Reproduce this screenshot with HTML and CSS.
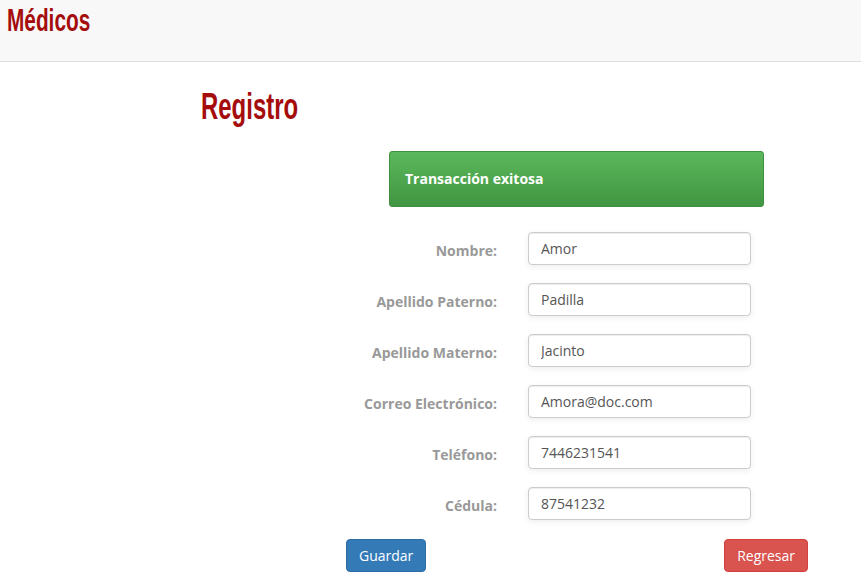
FILE: index.html
```html
<!DOCTYPE html>
<html lang="es">
<head>
    <meta charset="UTF-8">
    <meta name="viewport" content="width=device-width, initial-scale=1.0">
    <title>Médicos - Registro</title>
    <link rel="stylesheet" href="styles.css">
</head>
<body>

<nav class="navbar">
    <a class="brand" href="#">Médicos</a>
</nav>

<div class="page">
    <h1 class="title"><span>Registro</span></h1>

    <div class="alert">Transacción exitosa</div>

    <form class="form-grid">
        <label for="nombre">Nombre:</label>
        <input type="text" id="nombre" value="Amor">

        <label for="paterno">Apellido Paterno:</label>
        <input type="text" id="paterno" value="Padilla">

        <label for="materno">Apellido Materno:</label>
        <input type="text" id="materno" value="Jacinto">

        <label for="correo">Correo Electrónico:</label>
        <input type="text" id="correo" value="Amora@doc.com">

        <label for="telefono">Teléfono:</label>
        <input type="text" id="telefono" value="7446231541">

        <label for="cedula">Cédula:</label>
        <input type="text" id="cedula" value="87541232">
    </form>

    <div class="actions">
        <button type="button" class="btn btn-primary">Guardar</button>
        <button type="button" class="btn btn-danger">Regresar</button>
    </div>
</div>

</body>
</html>
```

FILE: styles.css
```css
body {
    margin: 0;
    font-family: "Open Sans", "DejaVu Sans", sans-serif;
    font-size: 14px;
    color: #333;
    background-color: #fff;
}

/* condensed look of the heading font */
.brand, .title span {
    display: inline-block;
    font-family: "Liberation Sans", Arial, sans-serif;
    font-weight: bold;
    color: #a50d0d;
    transform-origin: left center;
}

.navbar {
    height: 61px;
    background-color: #f8f8f8;
    border-bottom: 1px solid #e0e0e0;
}
.brand {
    margin-left: 7px;
    font-size: 32px;
    line-height: 40px;
    text-decoration: none;
    transform: scaleX(0.65);
}

.title {
    margin: 0;
    padding: 24px 0 0 201px;
    font-weight: normal;
    font-size: 36px;
    line-height: 40px;
}
.title span {
    transform: scaleX(0.665);
}

.alert {
    width: 343px;
    margin: 24px 0 0 389px;
    padding: 17px 15px;
    line-height: 20px;
    font-weight: bold;
    color: #fff;
    border: 1px solid #3e8f3e;
    border-radius: 3px;
    background-image: linear-gradient(to bottom, #5cb85c 0%, #419641 100%);
}

.form-grid {
    display: grid;
    grid-template-columns: 497px 223px;
    column-gap: 31px;
    row-gap: 18px;
    align-items: center;
    margin-top: 25px;
}
.form-grid label {
    text-align: right;
    font-weight: bold;
    color: #999;
    padding-top: 3px;
}
.form-grid input {
    height: 33px;
    box-sizing: border-box;
    padding: 6px 12px;
    font-family: "Open Sans", "DejaVu Sans", sans-serif;
    font-size: 14px;
    color: #555;
    border: 1px solid #ccc;
    border-radius: 4px;
    box-shadow: inset 0 1px 1px rgba(0, 0, 0, .075), 0 2px 6px rgba(0, 0, 0, .07);
}

.actions {
    display: flex;
    justify-content: space-between;
    width: 462px;
    margin: 19px 0 0 346px;
}
.btn {
    height: 33px;
    padding: 6px 12px;
    font-family: "Open Sans", "DejaVu Sans", sans-serif;
    font-size: 14px;
    line-height: 20px;
    color: #fff;
    border: 1px solid transparent;
    border-radius: 4px;
    cursor: pointer;
}
.btn-primary {
    background-color: #337ab7;
    border-color: #2e6da4;
}
.btn-danger {
    background-color: #d9534f;
    border-color: #d43f3a;
}
```
